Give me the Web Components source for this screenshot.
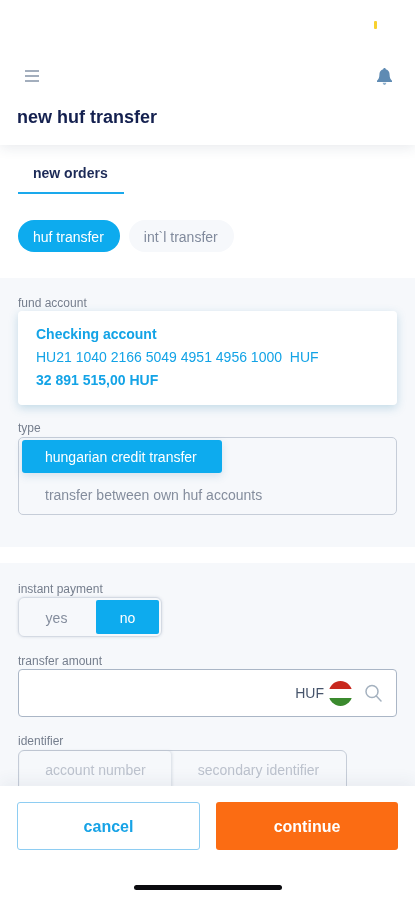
<!DOCTYPE html>
<html>
<head>
<meta charset="utf-8">
<title>new huf transfer</title>
<style>
  html, body { margin: 0; height: 900px; overflow: hidden; background: #fff; }
  body { font-family: "Liberation Sans", Arial, sans-serif; color: #0f1c4d; }
  app-screen { height: 900px; }
</style>
</head>
<body>
<app-screen>
  <app-header title="new huf transfer"></app-header>
  <app-tabs label="new orders"></app-tabs>
  <app-chips>
    <app-chip active>huf transfer</app-chip>
    <app-chip>int`l transfer</app-chip>
  </app-chips>
  <app-panel style="height:269px;padding-top:18px">
    <app-field label="fund account">
      <account-card name="Checking account" iban="HU21 1040 2166 5049 4951 4956 1000&nbsp; HUF" balance="32 891 515,00 HUF"></account-card>
    </app-field>
    <app-field label="type" style="margin-top:16px">
      <type-select first="hungarian credit transfer" second="transfer between own huf accounts"></type-select>
    </app-field>
  </app-panel>
  <app-panel style="height:340px;margin-top:16px;padding-top:19px">
    <app-field label="instant payment">
      <yes-no></yes-no>
    </app-field>
    <app-field label="transfer amount" style="margin-top:17px">
      <amount-input></amount-input>
    </app-field>
    <app-field label="identifier" style="margin-top:17px">
      <id-switch first="account number" second="secondary identifier"></id-switch>
    </app-field>
  </app-panel>
  <app-footer></app-footer>
</app-screen>

<script>
  // small helper, every component is just a shadow root filled from a string
  function component(name, render) {
    customElements.define(name, class extends HTMLElement {
      constructor() {
        super();
        this.attachShadow({ mode: 'open' });
      }
      connectedCallback() {
        this.shadowRoot.innerHTML = render(this);
      }
    });
  }

  // the reference is a soft, upscaled capture
  component('app-screen', () => `
    <style>:host { display: block; position: relative; width: 415px; overflow: hidden; filter: blur(.5px); }</style>
    <slot></slot>`);

  component('app-header', (el) => `
    <style>
      :host { display: block; position: relative; z-index: 2; height: 145px; box-sizing: border-box; padding-top: 67px; background: #fff; box-shadow: 0 3px 12px rgba(40,60,90,.1); }
      .dot { position: absolute; left: 374px; top: 21px; width: 3px; height: 8px; border-radius: 1px; background: #f8d12f; }
      .bar { display: flex; justify-content: space-between; align-items: center; height: 18px; padding: 0 23px 0 25px; }
      h1 { margin: 20px 0 0 17px; font-size: 18px; line-height: 24px; font-weight: 700; color: #14204f; }
      svg { display: block; }
    </style>
    <span class="dot"></span>
    <div class="bar">
      <svg width="14" height="12" viewBox="0 0 14 12"><path d="M0 1h14M0 6h14M0 11h14" stroke="#a3aebd" stroke-width="2"/></svg>
      <svg width="15" height="17" viewBox="0 0 15 17"><path d="M7.500 0C8.300 0 8.800.6 8.800 1.300 11.300 1.900 12.600 4 12.600 6.800 12.600 9.500 13.400 11.300 15 12.700V14H0V12.700C1.600 11.300 2.400 9.500 2.400 6.800 2.400 4 3.700 1.900 6.200 1.300 6.200.6 6.700 0 7.500 0z" fill="#5f8bb3"/><path d="M5.700 14.800h3.600C9.100 16.100 8.400 17 7.500 17S5.900 16.100 5.700 14.800z" fill="#8fb0cc"/></svg>
    </div>
    <h1>${el.getAttribute('title')}</h1>`);

  component('app-tabs', (el) => `
    <style>
      :host { display: block; padding: 0 18px; }
      div { width: 106px; height: 49px; box-sizing: border-box; padding: 21px 0 0 15px; border-bottom: 2px solid #1aa9ec; font-size: 14px; line-height: 15px; font-weight: 700; color: #1c2a57; }
    </style>
    <div>${el.getAttribute('label')}</div>`);

  component('app-chips', () => `
    <style>:host { display: flex; gap: 9px; padding: 26px 18px 26px; }</style>
    <slot></slot>`);

  component('app-chip', (el) => `
    <style>
      :host { display: block; height: 32px; padding: 0 16px 0 15px; border-radius: 16px; background: ${el.hasAttribute('active') ? '#0dabee' : '#f6f8fb'}; color: ${el.hasAttribute('active') ? '#fff' : '#808a9c'}; font-size: 14px; line-height: 34px; }
    </style>
    <slot></slot>`);

  component('app-panel', () => `
    <style>:host { display: block; box-sizing: border-box; background: #f6f8fb; padding: 0 18px; }</style>
    <slot></slot>`);

  component('app-field', (el) => `
    <style>
      :host { display: block; }
      label { display: block; height: 15px; font-size: 12px; line-height: 15px; color: #757e8d; }
    </style>
    <label>${el.getAttribute('label')}</label>
    <slot></slot>`);

  component('account-card', (el) => `
    <style>
      :host { display: block; height: 94px; box-sizing: border-box; padding: 12px 18px; background: #fff; border-radius: 4px; box-shadow: 0 3px 10px rgba(60,140,180,.28); color: #13a3e6; font-size: 14px; line-height: 23px; }
      b { display: block; }
    </style>
    <b>${el.getAttribute('name')}</b>
    <div>${el.getAttribute('iban')}</div>
    <b>${el.getAttribute('balance')}</b>`);

  component('type-select', (el) => `
    <style>
      :host { display: block; height: 78px; box-sizing: border-box; margin-top: 1px; padding: 2px 3px; border: 1px solid #c6cdd8; border-radius: 5px; font-size: 14px; }
      .on { width: 200px; height: 33px; box-sizing: border-box; padding-left: 23px; border-radius: 3px; background: #0dabee; color: #fff; line-height: 34px; box-shadow: 0 3px 8px rgba(60,120,170,.18); }
      .off { padding: 14px 0 0 23px; line-height: 17px; color: #848d9d; }
    </style>
    <div class="on">${el.getAttribute('first')}</div>
    <div class="off">${el.getAttribute('second')}</div>`);

  component('yes-no', () => `
    <style>
      :host { display: flex; width: 144px; height: 40px; box-sizing: border-box; padding: 2px; border: 1px solid #d4dae3; border-radius: 6px; box-shadow: 0 0 3px rgba(90,110,140,.2); font-size: 14px; text-align: center; line-height: 36px; }
      div { flex: none; height: 34px; }
      .yes { width: 71px; padding-right: 4px; color: #848d9d; }
      .no { width: 63px; background: #0dabee; color: #fff; border-radius: 2px; }
    </style>
    <div class="yes">yes</div>
    <div class="no">no</div>`);

  component('amount-input', () => `
    <style>
      :host { display: flex; align-items: center; justify-content: flex-end; height: 48px; box-sizing: border-box; padding-right: 14px; background: #fff; border: 1px solid #aab6c6; border-radius: 4px; font-size: 14px; color: #46546b; }
      span { margin-right: 5px; }
      svg { display: block; }
      .flag { margin-right: 13px; }
    </style>
    <span>HUF</span>
    <svg class="flag" width="23" height="25" viewBox="0 0 23 25">
      <defs><clipPath id="c"><ellipse cx="11.500" cy="12.500" rx="12" ry="12.500"/></clipPath></defs>
      <g clip-path="url(#c)">
        <rect width="23" height="8" fill="#c8281e"/>
        <rect y="8" width="23" height="9" fill="#fff"/>
        <rect y="17" width="23" height="8" fill="#3b8a2e"/>
      </g>
    </svg>
    <svg width="17" height="18" viewBox="0 0 17 18" fill="none" stroke="#a4b1bf" stroke-width="1.500"><circle cx="7" cy="7.500" r="6"/><path d="M11.300 12l4.700 5" stroke-linecap="round"/></svg>`);

  component('id-switch', (el) => `
    <style>
      :host { display: flex; width: 329px; height: 60px; box-sizing: border-box; padding: 0 1px; margin-top: 1px; border: 1px solid #c6cdd8; border-radius: 6px; font-size: 14px; color: #bcc2cd; text-align: center; line-height: 38px; }
      div { flex: none; }
      .a { width: 151px; box-shadow: 1px 0 3px rgba(90,110,140,.2); border-radius: 4px; }
      .b { width: 175px; }
    </style>
    <div class="a">${el.getAttribute('first')}</div>
    <div class="b">${el.getAttribute('second')}</div>`);

  component('app-footer', () => `
    <style>
      :host { position: absolute; left: 0; top: 786px; width: 415px; height: 114px; box-sizing: border-box; padding: 16px 17px 0; background: #fff; box-shadow: 0 -6px 14px rgba(50,70,100,.06); }
      .row { display: flex; justify-content: space-between; }
      button { display: block; height: 48px; margin: 0; padding: 1px 0 0; border-radius: 3px; font: 700 16px "Liberation Sans", Arial, sans-serif; }
      .cancel { width: 183px; background: #fff; border: 1px solid #8ecdf2; color: #17a3e6; }
      .go { width: 182px; background: #fb6c13; border: 0; color: #fff; }
      .home { width: 148px; height: 5px; margin: 35px 0 0 117px; border-radius: 3px; background: #0b0b0f; }
    </style>
    <div class="row">
      <button class="cancel">cancel</button>
      <button class="go">continue</button>
    </div>
    <div class="home"></div>`);
</script>
</body>
</html>
